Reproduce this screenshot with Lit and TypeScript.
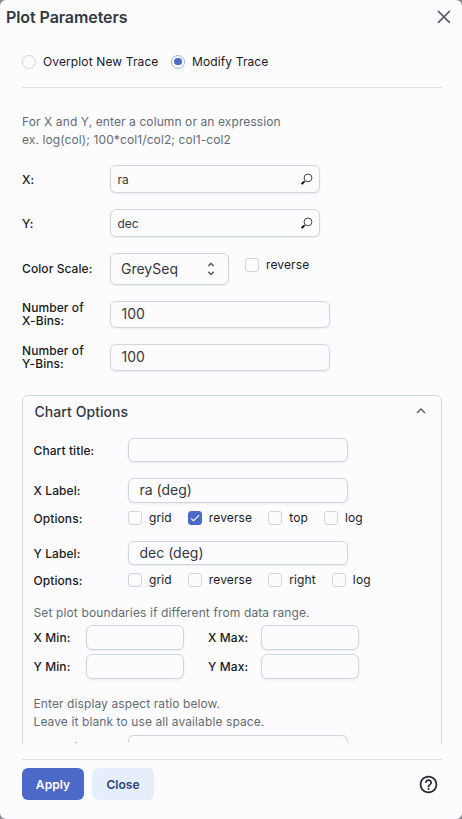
import { LitElement, html, css } from "lit";
import { customElement, property } from "lit/decorators.js";

const base = css`
  * { box-sizing: border-box; }
  :host { font-family: Inter, "Liberation Sans", sans-serif; font-size: 12px; color: #171a1c; }
`;

@customElement("check-box")
class CheckBox extends LitElement {
  @property() label = "";
  @property({ type: Boolean }) checked = false;
  static styles = [base, css`
    :host { display: flex; align-items: center; height: 14px; gap: 7px; white-space: nowrap; letter-spacing: 0.13px; }
    .box { width: 14px; height: 14px; border: 1px solid #cdd7e1; border-radius: 3px; flex: none; display: flex; }
    .on { background: #4b69c6; border-color: #4b69c6; }
    .text { line-height: 14px; }
    svg { width: 12px; height: 12px; }
  `];
  render() {
    return html`<span class="box ${this.checked ? "on" : ""}">
      ${this.checked ? html`<svg viewBox="0 0 24 24" fill="#fff"><path d="M9 16.17 4.83 12l-1.42 1.41L9 19 21 7l-1.41-1.41z"/></svg>` : ""}
    </span><span class="text">${this.label}</span>`;
  }
}

@customElement("text-field")
class TextField extends LitElement {
  @property() value = "";
  @property({ type: Boolean }) search = false;
  static styles = [base, css`
    :host { display: flex; align-items: center; justify-content: space-between; flex: none; height: 24px; padding: 0 10.5px 2px;
      border: 1px solid #cdd7e1; border-radius: 6px; box-shadow: 0 1px 2px rgba(21,21,21,.08);
      font-size: 14px; color: #32383e; background: #fcfcfe; }
    :host([search]) { font-size: 12px; padding: 0 6px 0 6.5px; }
    svg { width: 13px; height: 13px; }
  `];
  render() {
    return html`<span>${this.value}</span>${this.search ? html`<svg viewBox="0 0 13 13" fill="none">
      <circle cx="8" cy="4.9" r="3.9" stroke="#444" stroke-width="1"/>
      <path d="M5.1 7.9 3.8 9.1" stroke="#333" stroke-width="1"/>
      <path d="M4.1 8.8 1.6 11.1" stroke="#000" stroke-width="1.9"/></svg>` : ""}`;
  }
}

@customElement("app-root")
class AppRoot extends LitElement {
  static styles = [base, css`
    :host { display: block; height: 819px; background: #85888f; overflow: hidden; }
    .dialog { height: 819px; background: #fcfcfe; border-radius: 6px; display: flex; flex-direction: column; }
    .head { height: 34px; padding: 0 11px 0 6px; display: flex; align-items: center; justify-content: space-between; flex: none; }
    .title { font-size: 16px; font-weight: 600; color: #32383e; letter-spacing: -0.08px; }
    .close { width: 14px; height: 14px; }
    .body { height: 709px; padding: 0 20px 0 22px; overflow: hidden; flex: none; }
    .row { display: flex; align-items: center; }
    .radios { height: 54px; padding-top: 2px; border-bottom: 1px solid #dcdfe3; letter-spacing: 0.12px; }
    .radio { width: 14px; height: 14px; border: 1px solid #cdd7e1; border-radius: 50%; margin-right: 7px; display: flex; align-items: center; justify-content: center; }
    .radio.on { border-color: #97b2ea; }
    .dot { width: 7.5px; height: 7.5px; border-radius: 50%; background: #4b69c6; }
    .radio.second { margin-left: 12.5px; }
    .hint { color: #636b74; line-height: 18px; letter-spacing: 0.1px; }
    .intro { margin: 25px 0 16px; }
    .label { width: 88px; flex: none; font-weight: 500; line-height: 13px; color: #171a1c; letter-spacing: 0.08px; }
    .xy { height: 28px; margin-bottom: 16px; }
    .xy text-field { width: 210px; height: 28px; }
    .scale { height: 32px; margin-bottom: 16px; }
    .scale .label, .bins .label { padding-bottom: 2px; }
    .select { width: 119px; height: 32px; border: 1px solid #cdd7e1; border-radius: 6px; box-shadow: 0 1px 2px rgba(21,21,21,.08);
      padding: 0 8px 0 10px; display: flex; align-items: center; justify-content: space-between; font-size: 14px; color: #32383e; margin-right: 16px; }
    .select span { padding-bottom: 1px; }
    .select svg { width: 18px; height: 18px; }
    .scale check-box { margin-bottom: 8px; }
    .bins { height: 27px; margin-bottom: 16px; }
    .bins text-field { width: 220px; height: 27px; }
    .panel { border: 1px solid #cdd7e1; border-radius: 6px; margin-top: 24px; padding: 0 10.5px; height: 420px; }
    .summary { height: 32px; display: flex; align-items: center; justify-content: space-between; font-size: 14px; font-weight: 500; color: #32383e; padding: 0 1px 2px; letter-spacing: 0.06px; }
    .summary svg { width: 18px; height: 18px; }
    .opt { height: 24px; }
    .opt .label, .checks .label { width: 94.5px; }
    .opt text-field { width: 220px; }
    .checks { height: 14px; }
    .checks check-box { margin-right: 16px; }
    .t1 { margin-top: 10px; }
    .t2 { margin: 16px 0 8px; height: 25px; }
    .t2 text-field { height: 25px; }
    .t3 { margin: 16px 0 8px; }
    .bounds { margin-top: 17px; letter-spacing: 0.13px; }
    .limits { display: grid; grid-template-columns: 52.5px 98px 24px 53px 98px; row-gap: 4px; margin-top: 3px; align-items: center; }
    .limits .label { width: auto; }
    .limits text-field { height: 25px; }
    .limits text-field:last-of-type { height: 24.5px; }
    .aspect { margin: 16px 0 4px; }
    .foot { margin: 16px 20px 0 22px; border-top: 1px solid #dcdfe3; padding: 8px 3.5px 0 0; display: flex; align-items: center; gap: 8px; }
    .btn { height: 32px; width: 62px; border-radius: 6px; display: flex; align-items: center; justify-content: center; font-weight: 600; font-size: 12px; letter-spacing: 0.05px; }
    .solid { background: #4b69c6; color: #fff; }
    .soft { background: #e7eefb; color: #2b427c; }
    .help { width: 21px; height: 21px; margin-left: auto; }
  `];

  field(label: string, value: string) {
    return html`<div class="label">${label}</div><text-field .value=${value}></text-field>`;
  }

  checks(third: string, reversed: boolean) {
    return html`<div class="row checks"><div class="label">Options:</div>
      ${["grid", "reverse", third, "log"].map((n) => html`<check-box .label=${n} .checked=${reversed && n === "reverse"}></check-box>`)}
    </div>`;
  }

  render() {
    return html`<div class="dialog">
      <div class="head"><div class="title">Plot Parameters</div>
        <svg class="close" viewBox="0 0 14 14" stroke="#555e68" stroke-width="1.6" stroke-linecap="round"><path d="M1.4 1.4 12.4 12.4M12.4 1.4 1.4 12.4"/></svg>
      </div>
      <div class="body">
        <div class="row radios"><span class="radio"></span><span>Overplot New Trace</span>
          <span class="radio second on"><span class="dot"></span></span><span>Modify Trace</span></div>
        <div class="hint intro">For X and Y, enter a column or an expression<br>ex. log(col); 100*col1/col2; col1-col2</div>
        ${[["X:", "ra"], ["Y:", "dec"]].map(([l, v]) => html`<div class="row xy"><div class="label">${l}</div><text-field search value=${v}></text-field></div>`)}
        <div class="row scale"><div class="label">Color Scale:</div>
          <div class="select"><span>GreySeq</span><svg viewBox="0 0 24 24" fill="none" stroke="#555e68" stroke-width="2"><path d="m8.5 8 3.5-3.5L15.5 8M8.5 15.8l3.5 3.5 3.5-3.5"/></svg></div>
          <check-box label="reverse"></check-box></div>
        ${["X", "Y"].map((a) => html`<div class="row bins"><div class="label"><div>Number of</div><div>${a}-Bins:</div></div><text-field value="100"></text-field></div>`)}
        <div class="panel">
          <div class="summary"><span>Chart Options</span><svg viewBox="0 0 24 24" fill="#555e68"><path d="m12 8-6 6 1.41 1.41L12 10.83l4.59 4.58L18 14z"/></svg></div>
          <div class="row opt t1">${this.field("Chart title:", "")}</div>
          <div class="row opt t2">${this.field("X Label:", "ra (deg)")}</div>
          ${this.checks("top", true)}
          <div class="row opt t3">${this.field("Y Label:", "dec (deg)")}</div>
          ${this.checks("right", false)}
          <div class="hint bounds">Set plot boundaries if different from data range.</div>
          <div class="limits">
            ${["X", "Y"].map((a) => html`${this.field(a + " Min:", "")}<span></span>${this.field(a + " Max:", "")}`)}
          </div>
          <div class="hint aspect">Enter display aspect ratio below.<br>Leave it blank to use all available space.</div>
          <div class="row opt">${this.field("X/Y ratio:", "")}</div>
        </div>
      </div>
      <div class="foot"><div class="btn solid">Apply</div><div class="btn soft">Close</div>
        <svg class="help" viewBox="0 0 24 24" fill="#25292e"><path d="M11 18h2v-2h-2zm1-16C6.48 2 2 6.48 2 12s4.48 10 10 10 10-4.48 10-10S17.52 2 12 2m0 18c-4.41 0-8-3.59-8-8s3.59-8 8-8 8 3.59 8 8-3.59 8-8 8m0-14c-2.21 0-4 1.79-4 4h2c0-1.1.9-2 2-2s2 .9 2 2c0 2-3 1.75-3 5h2c0-2.25 3-2.5 3-5 0-2.21-1.79-4-4-4"/></svg>
      </div>
    </div>`;
  }
}
